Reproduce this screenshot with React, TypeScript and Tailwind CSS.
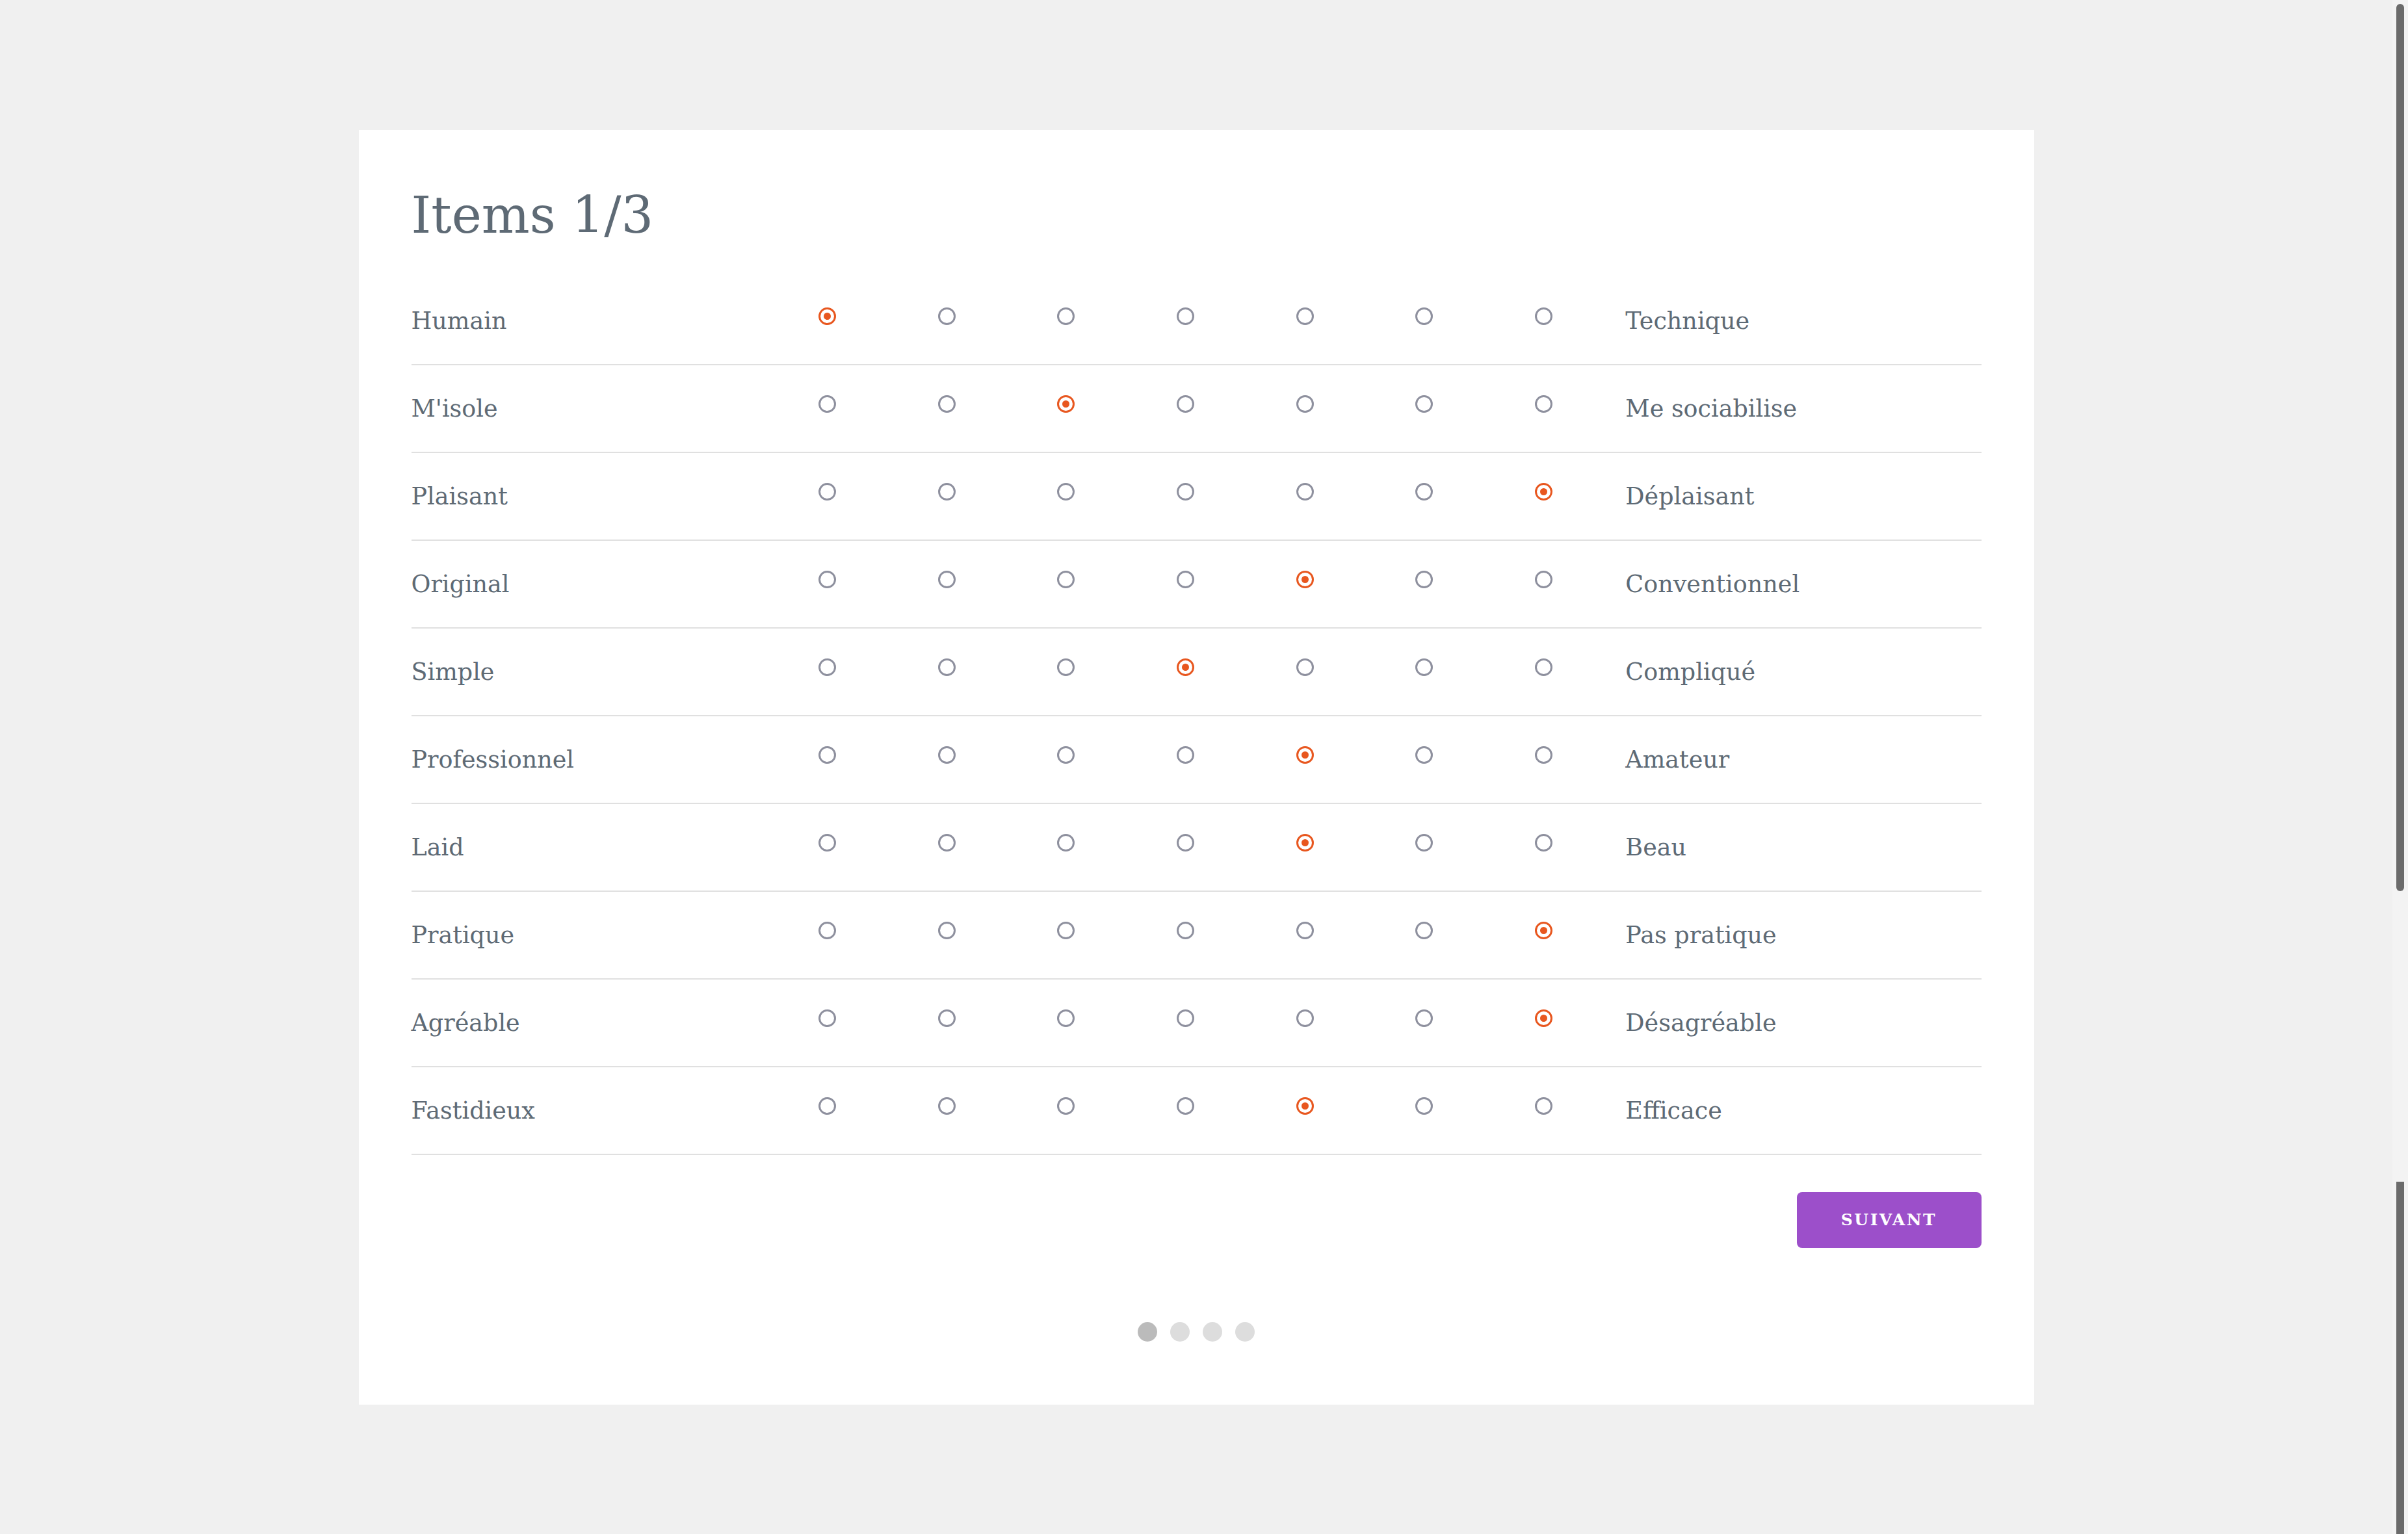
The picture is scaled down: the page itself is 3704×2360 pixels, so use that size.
import React from "react";

const rows: { left: string; right: string; value: number }[] = [
  { left: "Humain", right: "Technique", value: 0 },
  { left: "M'isole", right: "Me sociabilise", value: 2 },
  { left: "Plaisant", right: "Déplaisant", value: 6 },
  { left: "Original", right: "Conventionnel", value: 4 },
  { left: "Simple", right: "Compliqué", value: 3 },
  { left: "Professionnel", right: "Amateur", value: 4 },
  { left: "Laid", right: "Beau", value: 4 },
  { left: "Pratique", right: "Pas pratique", value: 6 },
  { left: "Agréable", right: "Désagréable", value: 6 },
  { left: "Fastidieux", right: "Efficace", value: 4 },
];

const Radio = ({ checked }: { checked: boolean }) => {
  if (checked) {
    return (
      <div className="w-[27px] h-[27px] rounded-full border-[3px] border-[#e8571f] flex items-center justify-center">
        <div className="w-[11px] h-[11px] rounded-full bg-[#e8571f]" />
      </div>
    );
  }
  return <div className="w-[27px] h-[27px] rounded-full border-[3px] border-[#8e909e]" />;
};

const Row = ({ row }: { row: { left: string; right: string; value: number } }) => {
  return (
    <div className="grid grid-cols-[548px_repeat(7,183.7px)_1fr] h-[135px] border-b-2 border-[#e0e0e0]">
      <div className="pt-[46px] text-[36.5px] leading-[42px]">{row.left}</div>
      {[0, 1, 2, 3, 4, 5, 6].map((i) => (
        <div key={i} className="flex justify-center pt-[46px]">
          <Radio checked={row.value === i} />
        </div>
      ))}
      <div className="pt-[46px] pl-[34px] text-[36.5px] leading-[42px]">{row.right}</div>
    </div>
  );
};

export default function App() {
  return (
    <div className="flex h-[2360px] w-full overflow-hidden bg-[#f0f0f0] font-['DejaVu_Serif',serif] text-[#5e6a75]">
      <div className="flex-1 flex justify-center pt-[200px]">
        <div className="w-[2577px] h-fit bg-white px-[81px] pt-[84px] pb-[97px]">
          <h1 className="text-[78px] leading-[94px] h-[94px]">Items 1/3</h1>
          <div className="mt-[49px]">
            {rows.map((row) => (
              <Row key={row.left} row={row} />
            ))}
          </div>
          <div className="flex justify-end mt-[57px]">
            <button className="w-[284px] h-[86px] rounded-[8px] bg-[#9c4fca] text-white font-bold text-[25px] tracking-[0.1em]">
              SUIVANT
            </button>
          </div>
          <div className="flex justify-center gap-[20px] mt-[114px]">
            <div className="w-[30px] h-[30px] rounded-full bg-[#bbbbbb]" />
            <div className="w-[30px] h-[30px] rounded-full bg-[#dddddd]" />
            <div className="w-[30px] h-[30px] rounded-full bg-[#dddddd]" />
            <div className="w-[30px] h-[30px] rounded-full bg-[#dddddd]" />
          </div>
        </div>
      </div>
      <div className="w-[24px] bg-[#f3f3f3] pl-[6px] flex flex-col">
        <div className="mt-[6px] w-[12px] h-[1365px] rounded-full bg-[#6b6b6b]" />
        <div className="mt-auto w-[12px] h-[542px] bg-[#6b6b6b]" />
      </div>
    </div>
  );
}
